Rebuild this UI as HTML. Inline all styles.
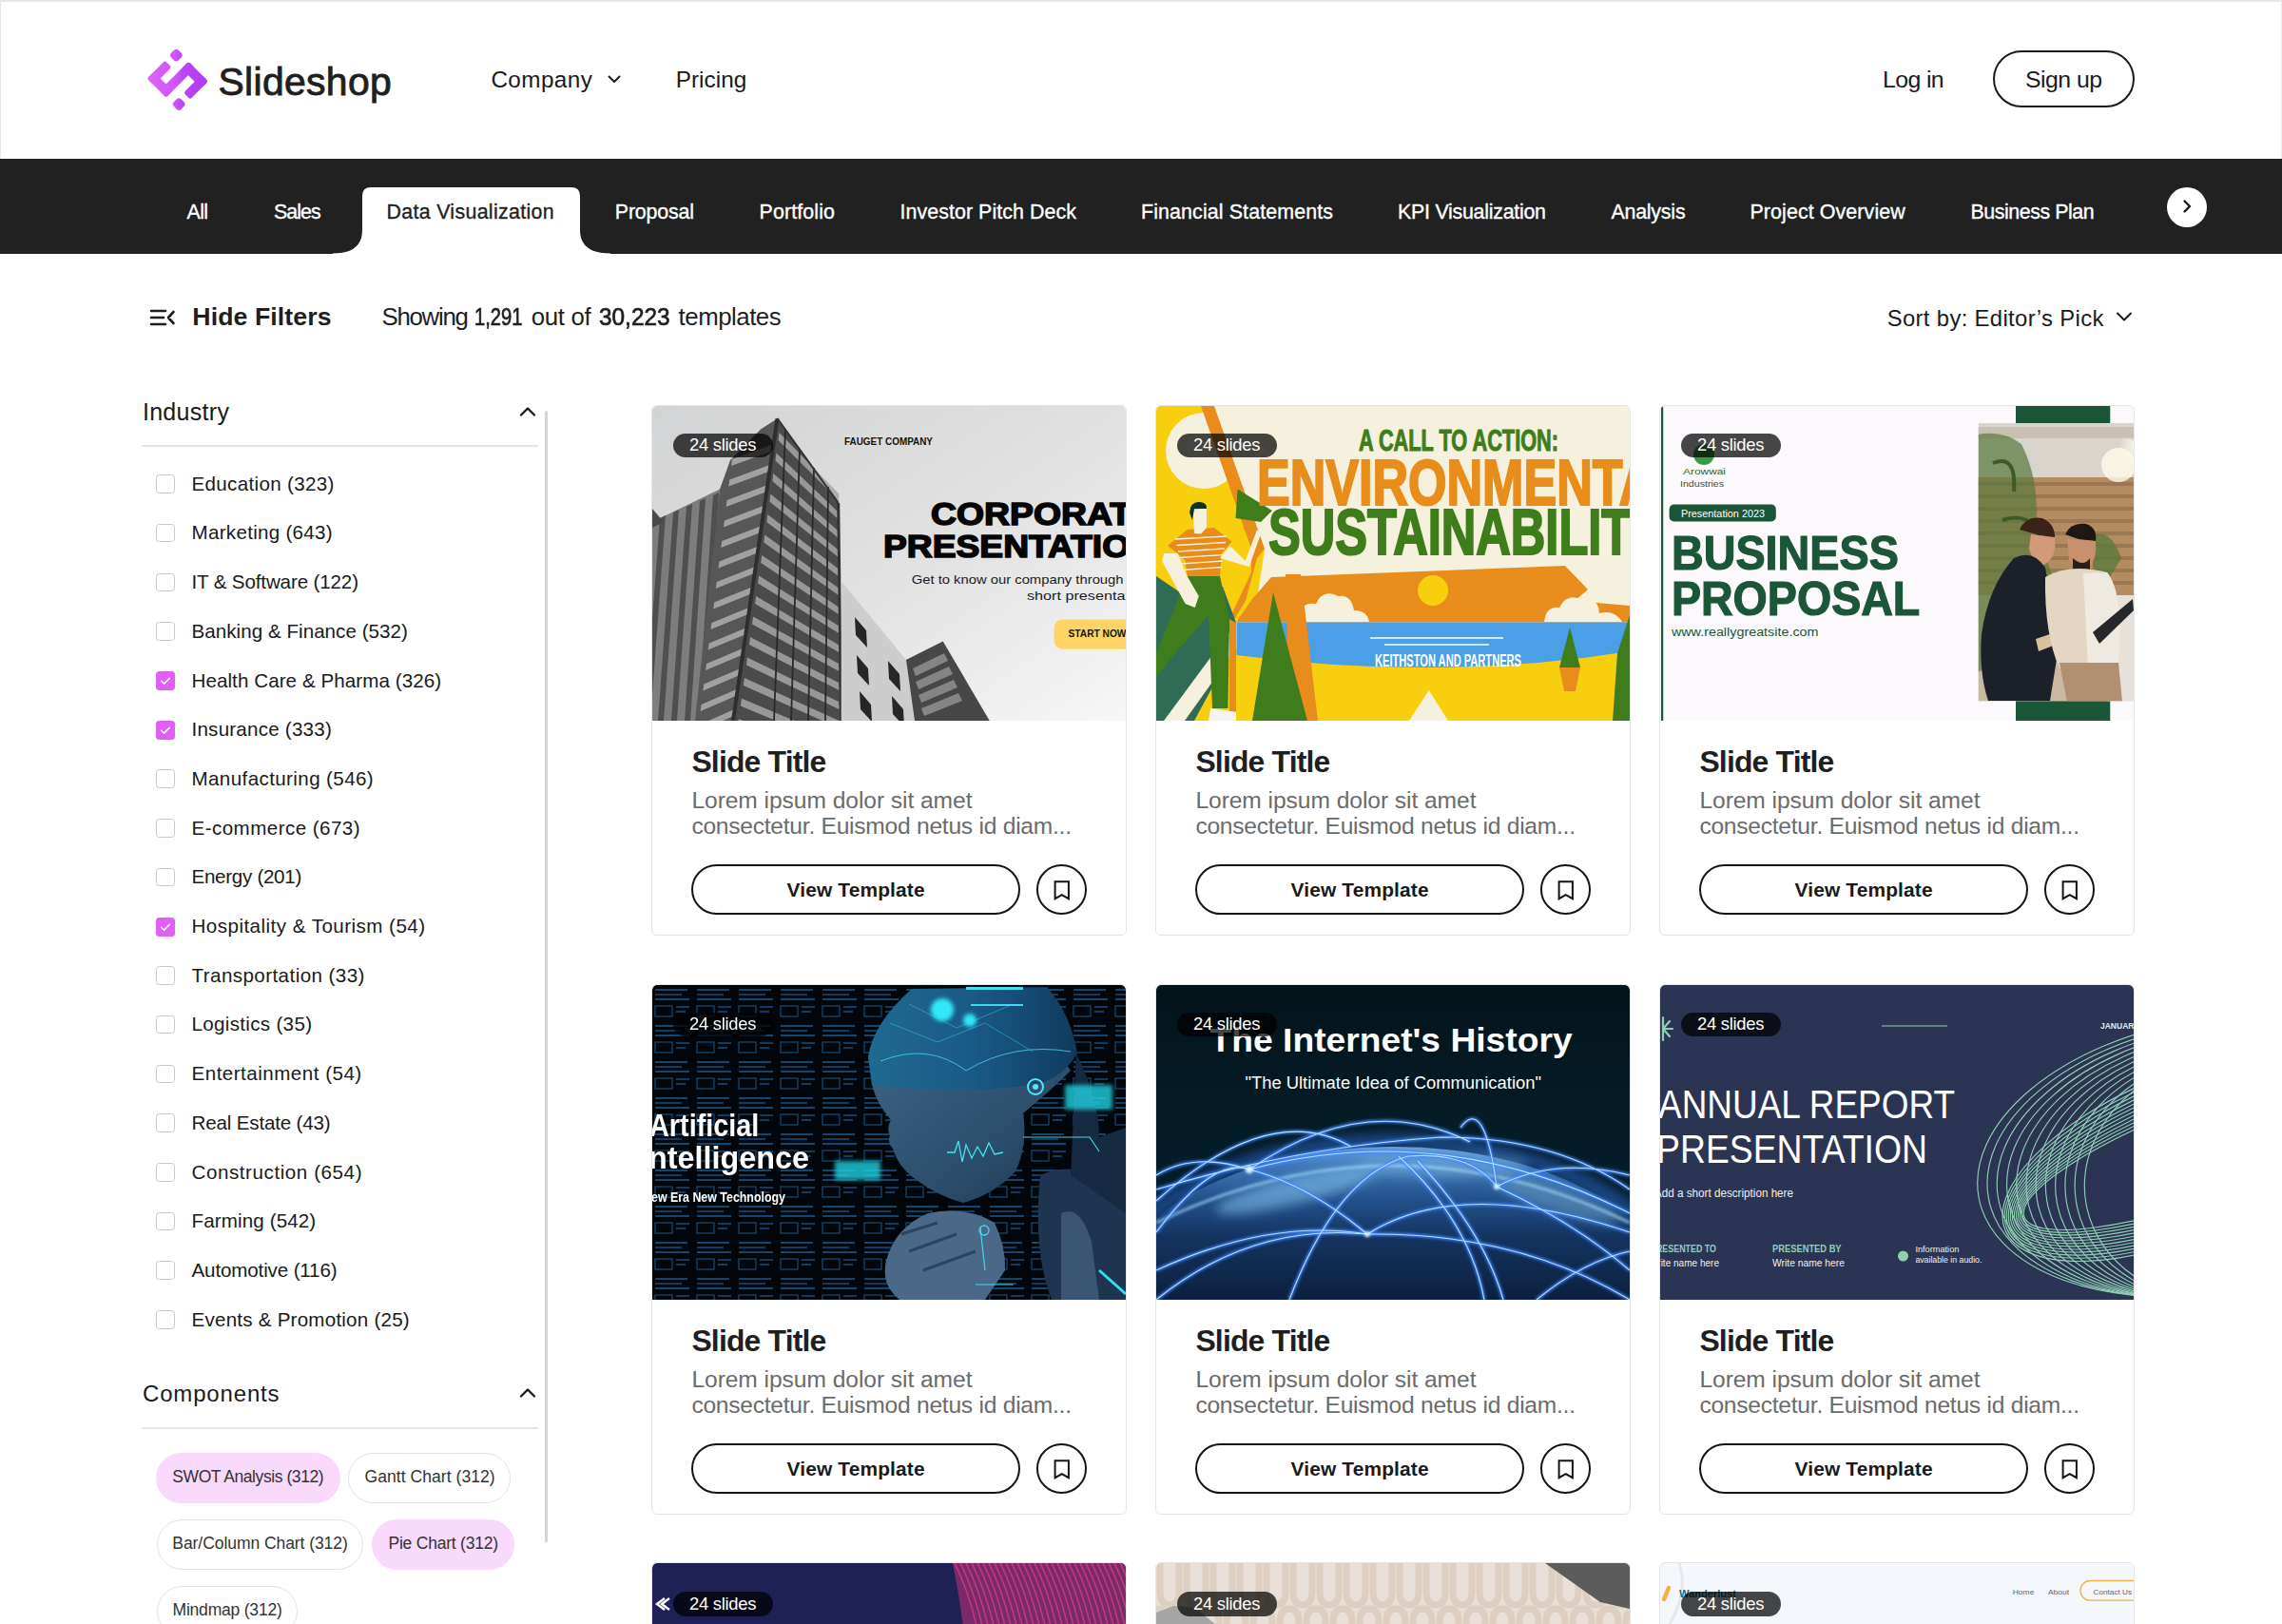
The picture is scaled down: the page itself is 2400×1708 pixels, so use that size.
<!DOCTYPE html>
<html><head><meta charset="utf-8"><title>Slideshop</title>
<style>
html,body{margin:0;padding:0;background:#fff;width:2400px;height:1708px;overflow:hidden;position:relative}
body{font-family:"Liberation Sans",sans-serif}
.t{position:absolute;white-space:nowrap}
b{font-weight:400;-webkit-text-stroke:0.7px #1f1f1f}
</style></head><body>
<div style="position:absolute;left:0;top:0;width:2400px;height:167px;background:#fff;box-sizing:border-box;border-top:2px solid #e8e8e8;border-left:1px solid #e8e8e8;border-right:1px solid #ececec"></div>
<svg style="position:absolute;left:0;top:0" width="240" height="130" viewBox="0 0 240 130"><defs><linearGradient id="lg" gradientUnits="userSpaceOnUse" x1="112" y1="112" x2="152" y2="152"><stop offset="0" stop-color="#dc62f9"/><stop offset="0.45" stop-color="#cf55f8"/><stop offset="0.6" stop-color="#b845f6"/><stop offset="1" stop-color="#b03ef4"/></linearGradient></defs><g transform="matrix(0.70711 -0.70711 0.70711 0.70711 0 0)" fill="url(#lg)"><rect x="51" y="167.7" width="26.6" height="9.8" rx="2.5"/><rect x="51" y="167.7" width="10.0" height="28.3" rx="2.5"/><rect x="51" y="186" width="43.4" height="10.0" rx="2.5"/><rect x="84" y="186" width="10.4" height="29.3" rx="2.5"/><rect x="67.5" y="205.5" width="26.9" height="9.8" rx="2.5"/><rect x="84.6" y="166.8" width="10.7" height="10.7" rx="3.2"/><rect x="50.2" y="205.2" width="10.7" height="10.7" rx="3.2"/></g></svg>
<svg style="position:absolute;left:638px;top:78px" width="16" height="11" viewBox="0 0 16 11"><path d="M2.5 2.5 L8 8 L13.5 2.5" fill="none" stroke="#1a1a1a" stroke-width="2" stroke-linecap="round" stroke-linejoin="round"/></svg>
<div style="position:absolute;left:2095.7px;top:53.4px;width:149.8px;height:59.4px;box-sizing:border-box;border:2px solid #1a1a1a;border-radius:30px"></div>
<div style="position:absolute;left:0;top:167px;width:2400px;height:99.5px;background:#212121"></div>
<svg style="position:absolute;left:350px;top:196px" width="292" height="71" viewBox="0 0 292 71"><path d="M0 70.5 Q31 70.5 31 46 L31 10 Q31 1 40 1 L251 1 Q260 1 260 10 L260 46 Q260 70.5 292 70.5 L292 71 L0 71 Z" fill="#ffffff"/></svg>
<div style="position:absolute;left:2279px;top:196.7px;width:42px;height:42px;border-radius:50%;background:#fff"></div>
<svg style="position:absolute;left:2290px;top:207px" width="20" height="20" viewBox="0 0 20 20"><path d="M7.5 4.5 L13 10 L7.5 15.5" fill="none" stroke="#1a1a1a" stroke-width="2.4" stroke-linecap="round" stroke-linejoin="round"/></svg>
<svg style="position:absolute;left:156px;top:324px" width="30" height="20" viewBox="0 0 30 20"><g fill="none" stroke="#1f1f1f" stroke-width="2.6" stroke-linecap="round" stroke-linejoin="round"><path d="M3 3 H18 M3 10 H16 M3 17 H18 M26.5 4 L21 10 L26.5 16"/></g></svg>
<svg style="position:absolute;left:2224px;top:326px" width="20" height="14" viewBox="0 0 20 14"><path d="M3 3.5 L10 10.5 L17 3.5" fill="none" stroke="#1a1a1a" stroke-width="2" stroke-linecap="round" stroke-linejoin="round"/></svg>
<svg style="position:absolute;left:544px;top:424.6px" width="22" height="16" viewBox="0 0 22 16"><path d="M4 11.5 L11 4.5 L18 11.5" fill="none" stroke="#1a1a1a" stroke-width="2.3" stroke-linecap="round" stroke-linejoin="round"/></svg>
<div style="position:absolute;left:149px;top:468.4px;width:417px;height:2px;background:#e6e6e6"></div>
<svg style="position:absolute;left:544px;top:1457.3px" width="22" height="16" viewBox="0 0 22 16"><path d="M4 11.5 L11 4.5 L18 11.5" fill="none" stroke="#1a1a1a" stroke-width="2.3" stroke-linecap="round" stroke-linejoin="round"/></svg>
<div style="position:absolute;left:149px;top:1500.6px;width:417px;height:2px;background:#e6e6e6"></div>
<div style="position:absolute;left:573px;top:431.5px;width:3.2px;height:1190px;background:#d4d4d4;border-radius:2px"></div>
<div style="position:absolute;left:164.3px;top:499.2px;width:19.5px;height:19.5px;box-sizing:border-box;border:1.6px solid #c8c8c8;border-radius:3.5px"></div>
<div style="position:absolute;left:164.3px;top:550.9px;width:19.5px;height:19.5px;box-sizing:border-box;border:1.6px solid #c8c8c8;border-radius:3.5px"></div>
<div style="position:absolute;left:164.3px;top:602.6px;width:19.5px;height:19.5px;box-sizing:border-box;border:1.6px solid #c8c8c8;border-radius:3.5px"></div>
<div style="position:absolute;left:164.3px;top:654.3px;width:19.5px;height:19.5px;box-sizing:border-box;border:1.6px solid #c8c8c8;border-radius:3.5px"></div>
<div style="position:absolute;left:164.2px;top:706.0px;width:20px;height:20px;border-radius:3.5px;background:#e060f6"></div>
<svg style="position:absolute;left:164.2px;top:706.0px" width="20" height="20" viewBox="0 0 20 20"><path d="M5.6 10.3 L8.6 13.1 L14.4 7.3" fill="none" stroke="#fff" stroke-width="1.5" stroke-linecap="round" stroke-linejoin="round"/></svg>
<div style="position:absolute;left:164.2px;top:757.7px;width:20px;height:20px;border-radius:3.5px;background:#e060f6"></div>
<svg style="position:absolute;left:164.2px;top:757.7px" width="20" height="20" viewBox="0 0 20 20"><path d="M5.6 10.3 L8.6 13.1 L14.4 7.3" fill="none" stroke="#fff" stroke-width="1.5" stroke-linecap="round" stroke-linejoin="round"/></svg>
<div style="position:absolute;left:164.3px;top:809.4px;width:19.5px;height:19.5px;box-sizing:border-box;border:1.6px solid #c8c8c8;border-radius:3.5px"></div>
<div style="position:absolute;left:164.3px;top:861.1px;width:19.5px;height:19.5px;box-sizing:border-box;border:1.6px solid #c8c8c8;border-radius:3.5px"></div>
<div style="position:absolute;left:164.3px;top:912.8px;width:19.5px;height:19.5px;box-sizing:border-box;border:1.6px solid #c8c8c8;border-radius:3.5px"></div>
<div style="position:absolute;left:164.2px;top:964.5px;width:20px;height:20px;border-radius:3.5px;background:#e060f6"></div>
<svg style="position:absolute;left:164.2px;top:964.5px" width="20" height="20" viewBox="0 0 20 20"><path d="M5.6 10.3 L8.6 13.1 L14.4 7.3" fill="none" stroke="#fff" stroke-width="1.5" stroke-linecap="round" stroke-linejoin="round"/></svg>
<div style="position:absolute;left:164.3px;top:1016.2px;width:19.5px;height:19.5px;box-sizing:border-box;border:1.6px solid #c8c8c8;border-radius:3.5px"></div>
<div style="position:absolute;left:164.3px;top:1067.9px;width:19.5px;height:19.5px;box-sizing:border-box;border:1.6px solid #c8c8c8;border-radius:3.5px"></div>
<div style="position:absolute;left:164.3px;top:1119.6px;width:19.5px;height:19.5px;box-sizing:border-box;border:1.6px solid #c8c8c8;border-radius:3.5px"></div>
<div style="position:absolute;left:164.3px;top:1171.3px;width:19.5px;height:19.5px;box-sizing:border-box;border:1.6px solid #c8c8c8;border-radius:3.5px"></div>
<div style="position:absolute;left:164.3px;top:1223.0px;width:19.5px;height:19.5px;box-sizing:border-box;border:1.6px solid #c8c8c8;border-radius:3.5px"></div>
<div style="position:absolute;left:164.3px;top:1274.7px;width:19.5px;height:19.5px;box-sizing:border-box;border:1.6px solid #c8c8c8;border-radius:3.5px"></div>
<div style="position:absolute;left:164.3px;top:1326.4px;width:19.5px;height:19.5px;box-sizing:border-box;border:1.6px solid #c8c8c8;border-radius:3.5px"></div>
<div style="position:absolute;left:164.3px;top:1378.1px;width:19.5px;height:19.5px;box-sizing:border-box;border:1.6px solid #c8c8c8;border-radius:3.5px"></div>
<div style="position:absolute;left:164.2px;top:1528.2px;width:193.5px;height:53.1px;border-radius:27px;background:#f9d9fc;"></div>
<div style="position:absolute;left:366.2px;top:1528.2px;width:170.9px;height:53.1px;border-radius:27px;border:1.6px solid #e2e2e2;box-sizing:border-box;"></div>
<div style="position:absolute;left:164.6px;top:1598px;width:217.3px;height:52.8px;border-radius:27px;border:1.6px solid #e2e2e2;box-sizing:border-box;"></div>
<div style="position:absolute;left:391px;top:1598px;width:150.1px;height:52.8px;border-radius:27px;background:#f9d9fc;"></div>
<div style="position:absolute;left:164.6px;top:1668.3px;width:148.8px;height:52.7px;border-radius:27px;border:1.6px solid #e2e2e2;box-sizing:border-box;"></div>
<div style="position:absolute;left:685px;top:426px;width:500px;height:557.5px;box-sizing:border-box;border:1.5px solid #e4e4e4;border-radius:6px;background:#fff;overflow:hidden"><div style="position:absolute;left:0;top:0;width:498px;height:331px;overflow:hidden;border-radius:5px 5px 0 0"><svg style="position:absolute;left:0;top:0" width="498" height="331" viewBox="0 0 498 331"><defs><linearGradient id="sky0" x1="0" y1="0" x2="1" y2="1"><stop offset="0" stop-color="#d2d3d4"/><stop offset="0.55" stop-color="#e2e2e2"/><stop offset="1" stop-color="#f7f7f7"/></linearGradient></defs><rect width="498" height="331" fill="url(#sky0)"/><polygon points="0,122 71,87.6 60,331 0,331" fill="#7d7d7d"/><polygon points="8,118 14,115 -2,331 -8,331" fill="#4f4f4f"/><polygon points="22,112 28,109 12,331 6,331" fill="#4f4f4f"/><polygon points="36,106 42,103 26,331 20,331" fill="#4f4f4f"/><polygon points="50,100 56,97 40,331 34,331" fill="#4f4f4f"/><polygon points="64,94 70,91 54,331 48,331" fill="#4f4f4f"/><polygon points="0,108 12,122 0,128" fill="#4a4a4a"/><polygon points="71,87.6 82,57 114,24.5 131.5,13.2 85,331 45,331" fill="#575757"/><polygon points="84.0,56.0 128.0,40.0 127.2,47.0 83.0,63.0" fill="#b4b4b4" opacity="0.8"/><polygon points="81.3,77.5 124.7,61.5 123.9,68.5 80.3,84.5" fill="#b4b4b4" opacity="0.8"/><polygon points="78.6,99.0 121.4,83.0 120.60000000000001,90.0 77.6,106.0" fill="#b4b4b4" opacity="0.8"/><polygon points="75.9,120.5 118.1,104.5 117.3,111.5 74.9,127.5" fill="#b4b4b4" opacity="0.8"/><polygon points="73.2,142.0 114.8,126.0 114.0,133.0 72.2,149.0" fill="#b4b4b4" opacity="0.8"/><polygon points="70.5,163.5 111.5,147.5 110.7,154.5 69.5,170.5" fill="#b4b4b4" opacity="0.8"/><polygon points="67.8,185.0 108.2,169.0 107.4,176.0 66.8,192.0" fill="#b4b4b4" opacity="0.8"/><polygon points="65.1,206.5 104.9,190.5 104.10000000000001,197.5 64.1,213.5" fill="#b4b4b4" opacity="0.8"/><polygon points="62.400000000000006,228.0 101.6,212.0 100.8,219.0 61.400000000000006,235.0" fill="#b4b4b4" opacity="0.8"/><polygon points="59.7,249.5 98.3,233.5 97.5,240.5 58.7,256.5" fill="#b4b4b4" opacity="0.8"/><polygon points="57.0,271.0 95.0,255.0 94.2,262.0 56.0,278.0" fill="#b4b4b4" opacity="0.8"/><polygon points="54.3,292.5 91.7,276.5 90.9,283.5 53.3,299.5" fill="#b4b4b4" opacity="0.8"/><polygon points="51.599999999999994,314.0 88.4,298.0 87.60000000000001,305.0 50.599999999999994,321.0" fill="#b4b4b4" opacity="0.8"/><polygon points="48.900000000000006,335.5 85.1,319.5 84.3,326.5 47.900000000000006,342.5" fill="#b4b4b4" opacity="0.8"/><polygon points="131.5,13.2 195.7,101.9 198.7,331 85,331" fill="#4b4b4b"/><polygon points="133.5,28.0 196,92.0 196.5,100.0 132.5,36.0" fill="#a6a6a6" opacity="0.85"/><polygon points="130.45,49.5 196,111.9 196.5,119.9 129.45,57.5" fill="#a6a6a6" opacity="0.85"/><polygon points="127.4,71.0 196,131.8 196.5,139.8 126.4,79.0" fill="#a6a6a6" opacity="0.85"/><polygon points="124.35,92.5 196,151.7 196.5,159.7 123.35,100.5" fill="#a6a6a6" opacity="0.85"/><polygon points="121.3,114.0 196,171.6 196.5,179.6 120.3,122.0" fill="#a6a6a6" opacity="0.85"/><polygon points="118.25,135.5 196,191.5 196.5,199.5 117.25,143.5" fill="#a6a6a6" opacity="0.85"/><polygon points="115.2,157.0 196,211.4 196.5,219.4 114.2,165.0" fill="#a6a6a6" opacity="0.85"/><polygon points="112.15,178.5 196,231.3 196.5,239.3 111.15,186.5" fill="#a6a6a6" opacity="0.85"/><polygon points="109.1,200.0 196,251.2 196.5,259.2 108.1,208.0" fill="#a6a6a6" opacity="0.85"/><polygon points="106.05,221.5 196,271.1 196.5,279.1 105.05,229.5" fill="#a6a6a6" opacity="0.85"/><polygon points="103.0,243.0 196,291.0 196.5,299.0 102.0,251.0" fill="#a6a6a6" opacity="0.85"/><polygon points="99.95,264.5 196,310.9 196.5,318.9 98.95,272.5" fill="#a6a6a6" opacity="0.85"/><polygon points="96.9,286.0 196,330.8 196.5,338.8 95.9,294.0" fill="#a6a6a6" opacity="0.85"/><polygon points="93.85,307.5 196,350.7 196.5,358.7 92.85,315.5" fill="#a6a6a6" opacity="0.85"/><polygon points="90.80000000000001,329.0 196,370.6 196.5,378.6 89.80000000000001,337.0" fill="#a6a6a6" opacity="0.85"/><line x1="140" y1="25" x2="128" y2="331" stroke="#2a2a2a" stroke-width="1.8"/><line x1="155" y1="45" x2="146" y2="331" stroke="#2a2a2a" stroke-width="1.8"/><line x1="170" y1="65" x2="164" y2="331" stroke="#2a2a2a" stroke-width="1.8"/><line x1="185" y1="85" x2="182" y2="331" stroke="#2a2a2a" stroke-width="1.8"/><line x1="131.5" y1="13.2" x2="85" y2="331" stroke="#2e2e2e" stroke-width="4"/><line x1="131.5" y1="13.2" x2="195.7" y2="101.9" stroke="#333" stroke-width="2"/><line x1="195.7" y1="101.9" x2="198.7" y2="331" stroke="#333" stroke-width="3"/><polygon points="198.7,184.5 267,267 305.7,247.6 354.7,331 198.7,331" fill="#cdcdcd"/><polygon points="213,222 225,236 226,254 214,241" fill="#262626"/><polygon points="215,262 227,276 228,294 216,281" fill="#262626"/><polygon points="218,300 230,314 231,332 219,319" fill="#262626"/><polygon points="248,268 260,282 261,300 249,287" fill="#262626"/><polygon points="252,305 264,319 265,337 253,324" fill="#262626"/><polygon points="267,267 305.7,247.6 354.7,331 276,331" fill="#474747"/><polygon points="274,276 307,260 311,268 277,284" fill="#a0a0a0" opacity="0.7"/><polygon points="277,290 312,274 316,282 280,298" fill="#a0a0a0" opacity="0.7"/><polygon points="280,304 317,288 321,296 283,312" fill="#a0a0a0" opacity="0.7"/><polygon points="283,318 322,302 326,310 286,326" fill="#a0a0a0" opacity="0.7"/><text x="202" y="41.4" font-size="10.6" font-weight="bold" fill="#111" font-family="Liberation Sans" textLength="93" lengthAdjust="spacingAndGlyphs" >FAUGET COMPANY</text><text x="293" y="125" font-size="34" font-weight="bold" fill="#050505" font-family="Liberation Sans" textLength="236" lengthAdjust="spacingAndGlyphs" stroke="#050505" stroke-width="1.6">CORPORATE</text><text x="243" y="158.6" font-size="34" font-weight="bold" fill="#050505" font-family="Liberation Sans" textLength="286" lengthAdjust="spacingAndGlyphs" stroke="#050505" stroke-width="1.6">PRESENTATION</text><text x="272.7" y="186.5" font-size="13.5" font-weight="normal" fill="#1a1a1a" font-family="Liberation Sans" textLength="250" lengthAdjust="spacingAndGlyphs" >Get to know our company through this</text><text x="394" y="203.5" font-size="13.5" font-weight="normal" fill="#1a1a1a" font-family="Liberation Sans" textLength="134" lengthAdjust="spacingAndGlyphs" >short presentation.</text><rect x="422.5" y="224.4" width="120" height="31.3" rx="9" fill="#fdd465"/><text x="437.5" y="242.5" font-size="10.8" font-weight="bold" fill="#141414" font-family="Liberation Sans" textLength="61" lengthAdjust="spacingAndGlyphs" >START NOW</text></svg></div></div>
<div style="position:absolute;left:727px;top:909.3px;width:346px;height:52.5px;box-sizing:border-box;border:2px solid #141414;border-radius:27px"></div>
<div style="position:absolute;left:1090px;top:909.3px;width:52.7px;height:52.7px;box-sizing:border-box;border:2px solid #141414;border-radius:50%"></div>
<svg style="position:absolute;left:1106px;top:925.5px" width="22" height="21" viewBox="0 0 22 21"><path d="M3.6 1.2 H17.9 V19.2 L10.75 15.2 L3.6 19.2 Z" fill="none" stroke="#141414" stroke-width="2" stroke-linejoin="miter"/></svg>
<div style="position:absolute;left:707.9px;top:455.7px;width:104.9px;height:25.8px;border-radius:13px;background:rgba(0,0,0,0.72)"></div>
<div style="position:absolute;left:1215px;top:426px;width:500px;height:557.5px;box-sizing:border-box;border:1.5px solid #e4e4e4;border-radius:6px;background:#fff;overflow:hidden"><div style="position:absolute;left:0;top:0;width:498px;height:331px;overflow:hidden;border-radius:5px 5px 0 0"><svg style="position:absolute;left:0;top:0" width="498" height="331" viewBox="0 0 498 331"><defs></defs><rect width="498" height="331" fill="#f6f1dc"/><polygon points="0,0 52,0 114,150 106,204 84,227 84,331 0,331" fill="#f8cf0e"/><circle cx="50" cy="47" r="40" fill="#f6f1dc"/><polygon points="47,0 61,0 114,150 106,160 94,205 80,228 84,228 84,331 77,331 77,224 100,175 100,150" fill="#e88d1b"/><polygon points="0,179 25,196 70,190 84,228 84,250 40,331 0,331" fill="#2f6b55"/><polygon points="106,204 84,228 8,331 30,331 84,255 112,215" fill="#f6f1dc"/><polygon points="77,224 84,228 84,331 77,331" fill="#e88d1b"/><polygon points="32.6,179 67,179 77,224 75.4,318 59,318 55,220 20,260 0,285 0,260" fill="#3f7d1c"/><polygon points="0,262 32,200 38,210 6,275" fill="#3f7d1c"/><polygon points="12,147 32.6,130 61,128 79.5,142.6 69,155 67,179 32.6,179 30.6,163 22.4,155" fill="#e88d1b"/><line x1="20.0" y1="140.0" x2="74" y2="137.0" stroke="#f6f1dc" stroke-width="1.3"/><line x1="21.5" y1="146.5" x2="73" y2="143.5" stroke="#f6f1dc" stroke-width="1.3"/><line x1="23.0" y1="153.0" x2="72" y2="150.0" stroke="#f6f1dc" stroke-width="1.3"/><line x1="24.5" y1="159.5" x2="71" y2="156.5" stroke="#f6f1dc" stroke-width="1.3"/><line x1="26.0" y1="166.0" x2="70" y2="163.0" stroke="#f6f1dc" stroke-width="1.3"/><line x1="27.5" y1="172.5" x2="69" y2="169.5" stroke="#f6f1dc" stroke-width="1.3"/><polygon points="38.7,110 53,106 53,128 47,134.5 40,134" fill="#f6f1dc"/><path d="M35 112 Q36 100 46 101 Q54 102 53 108 L40 108 L38 120 Z" fill="#14301e"/><polygon points="8,155 22.4,155 32.6,179 44.8,200 40.7,212 30.6,208 6,163" fill="#f6f1dc"/><polygon points="77.4,146.7 93.7,163 106,130 110,134.5 97.8,169 67,160" fill="#f6f1dc"/><polygon points="85.6,87.6 122,110 110,122 83.5,118" fill="#3f7d1c"/><polygon points="57,318 85.6,322 86,331 55,331" fill="#f4f4f0"/><polygon points="101,203 121,180 430,168 454,193 440,205 498,210 498,227.5 84,227.5" fill="#e88d1b"/><path d="M148 227 Q150 205 168 208 Q175 192 192 200 Q205 198 208 215 Q222 215 224 227 Z" fill="#f6f1dc"/><path d="M408 227 Q410 210 424 212 Q432 196 448 204 Q465 200 466 218 Q482 214 490 227 Z" fill="#f6f1dc"/><circle cx="291" cy="194" r="16" fill="#f8cf0e"/><rect x="84" y="255" width="414" height="76" fill="#f8cf0e"/><path d="M84.5 227.5 L498 227.5 L498 258 Q300 290 84.5 262 Z" fill="#4b9fe6"/><polygon points="136,177 152,177 170,331 140,331" fill="#e88d1b"/><polygon points="123,196 159,331 101,331" fill="#3f7d1c"/><polygon points="435,233 446,275 424,275" fill="#3f7d1c"/><polygon points="424,275 446,275 441,300 429,300" fill="#e88d1b"/><polygon points="498,220 485,260 480,331 498,331" fill="#3f7d1c"/><polygon points="286.7,299 307,331 266,331" fill="#f6f1dc"/><rect x="225" y="243" width="140" height="2" fill="#f6f6f6" opacity="0.8"/><rect x="240" y="250" width="110" height="2" fill="#f6f6f6" opacity="0.8"/><text x="213" y="46.5" font-size="31" font-weight="bold" fill="#3f7d1c" font-family="Liberation Sans" textLength="210" lengthAdjust="spacingAndGlyphs" stroke="#3f7d1c" stroke-width="1">A CALL TO ACTION:</text><text x="106" y="103.5" font-size="68" font-weight="bold" fill="#e88d1b" font-family="Liberation Sans" textLength="450" lengthAdjust="spacingAndGlyphs" stroke="#e88d1b" stroke-width="2.2">ENVIRONMENTAL</text><text x="118" y="156" font-size="69" font-weight="bold" fill="#3f7d1c" font-family="Liberation Sans" textLength="415" lengthAdjust="spacingAndGlyphs" stroke="#3f7d1c" stroke-width="2.2">SUSTAINABILITY</text><text x="230" y="274.4" font-size="17.5" font-weight="bold" fill="#ffffff" font-family="Liberation Sans" textLength="154" lengthAdjust="spacingAndGlyphs" >KEITHSTON AND PARTNERS</text></svg></div></div>
<div style="position:absolute;left:1257px;top:909.3px;width:346px;height:52.5px;box-sizing:border-box;border:2px solid #141414;border-radius:27px"></div>
<div style="position:absolute;left:1620px;top:909.3px;width:52.7px;height:52.7px;box-sizing:border-box;border:2px solid #141414;border-radius:50%"></div>
<svg style="position:absolute;left:1636px;top:925.5px" width="22" height="21" viewBox="0 0 22 21"><path d="M3.6 1.2 H17.9 V19.2 L10.75 15.2 L3.6 19.2 Z" fill="none" stroke="#141414" stroke-width="2" stroke-linejoin="miter"/></svg>
<div style="position:absolute;left:1237.9px;top:455.7px;width:104.9px;height:25.8px;border-radius:13px;background:rgba(0,0,0,0.72)"></div>
<div style="position:absolute;left:1745px;top:426px;width:500px;height:557.5px;box-sizing:border-box;border:1.5px solid #e4e4e4;border-radius:6px;background:#fff;overflow:hidden"><div style="position:absolute;left:0;top:0;width:498px;height:331px;overflow:hidden;border-radius:5px 5px 0 0"><svg style="position:absolute;left:0;top:0" width="498" height="331" viewBox="0 0 498 331"><defs><linearGradient id="ph2" x1="0" y1="0" x2="0" y2="1"><stop offset="0" stop-color="#d4d2cc"/><stop offset="0.22" stop-color="#cfc9bd"/><stop offset="0.3" stop-color="#9d7a55"/><stop offset="0.55" stop-color="#b08d64"/><stop offset="1" stop-color="#c2b59e"/></linearGradient>
<radialGradient id="lt2" cx="0.85" cy="0.18" r="0.35"><stop offset="0" stop-color="#fffdf5"/><stop offset="1" stop-color="#fffdf5" stop-opacity="0"/></radialGradient></defs><rect width="498" height="331" fill="#fbf9fb"/><rect x="1" y="0" width="2.2" height="331" fill="#1c5638"/><rect x="374" y="0" width="99.3" height="18" fill="#1c5638"/><rect x="374" y="310" width="99.3" height="21" fill="#1c5638"/><svg x="334.8" y="18.1" width="163.2" height="292.1" viewBox="334.8 18.1 163.2 292.1" overflow="hidden"><rect x="334" y="18" width="165" height="293" fill="#d9d5cd"/><rect x="334" y="22" width="165" height="12" fill="#c8c0b2"/><rect x="334" y="75" width="165" height="124" fill="#b48c62"/><rect x="334" y="80" width="165" height="4" fill="#8a6a48" opacity="0.6"/><rect x="334" y="93" width="165" height="4" fill="#8a6a48" opacity="0.6"/><rect x="334" y="106" width="165" height="4" fill="#8a6a48" opacity="0.6"/><rect x="334" y="119" width="165" height="4" fill="#8a6a48" opacity="0.6"/><rect x="334" y="132" width="165" height="4" fill="#8a6a48" opacity="0.6"/><rect x="334" y="145" width="165" height="4" fill="#8a6a48" opacity="0.6"/><rect x="334" y="158" width="165" height="4" fill="#8a6a48" opacity="0.6"/><rect x="334" y="171" width="165" height="4" fill="#8a6a48" opacity="0.6"/><rect x="334" y="184" width="165" height="4" fill="#8a6a48" opacity="0.6"/><rect x="470" y="199" width="30" height="112" fill="#e6e2da"/><rect x="334" y="199" width="140" height="112" fill="#c9b9a0"/><circle cx="482" cy="62" r="30" fill="url(#lt2)"/><circle cx="482" cy="62" r="18" fill="#fffbea" opacity="0.8"/><path d="M334 30 Q360 25 380 40 Q400 80 395 130 Q410 170 420 200 Q390 230 370 260 L334 280 Z" fill="#58773a" opacity="0.7"/><path d="M350 60 Q375 50 372 90 M360 120 Q390 110 400 140" stroke="#3e5a28" stroke-width="4" fill="none"/><path d="M455 135 Q475 130 485 160 L470 185 L455 170 Z" fill="#5a7a3a" opacity="0.8"/><path d="M378 130 Q385 115 402 118 Q416 124 415 140 L396 135 Z" fill="#3a2418"/><path d="M390 135 L415 138 Q418 158 404 167 Q392 165 388 150 Z" fill="#d29a78"/><path d="M372 160 Q392 150 405 170 L412 210 L418 260 L410 310 L345 310 Q335 280 338 240 Q345 190 372 160 Z" fill="#1c2129"/><polygon points="395,245 440,230 444,240 398,258" fill="#d8c29c"/><circle cx="425" cy="233" r="5" fill="#d29a78"/><path d="M426 135 Q432 122 448 124 Q460 128 458 142 L440 140 Z" fill="#1e1814"/><path d="M428 140 L458 142 Q460 160 450 172 Q436 176 430 162 Z" fill="#c8906c"/><path d="M434 160 Q445 170 452 160 L452 172 Q442 180 434 172 Z" fill="#2a1e16"/><path d="M405 180 Q430 165 470 175 Q482 190 484 230 L482 276 L420 276 Q404 240 405 180 Z" fill="#e3d6c2"/><path d="M445 176 L470 175 Q482 190 484 230 L482 276 L450 276 Z" fill="#eeeae2"/><polygon points="455,238 497,203 498,215 462,250" fill="#26282c"/><polygon points="420,270 482,270 486,311 428,311" fill="#b09070"/></svg><circle cx="46" cy="51" r="11" fill="#3e9a4a"/><text x="24" y="72" font-size="9.5" font-weight="normal" fill="#2a5a3e" font-family="Liberation Sans" textLength="45" lengthAdjust="spacingAndGlyphs" >Arowwai</text><text x="21" y="84.5" font-size="9.5" font-weight="normal" fill="#2a5a3e" font-family="Liberation Sans" textLength="46" lengthAdjust="spacingAndGlyphs" >Industries</text><rect x="9.6" y="103.5" width="112.2" height="17.9" rx="5" fill="#1c5638"/><text x="22" y="116.5" font-size="10.5" font-weight="normal" fill="#ffffff" font-family="Liberation Sans" textLength="88" lengthAdjust="spacingAndGlyphs" >Presentation 2023</text><text x="11.9" y="171.6" font-size="50" font-weight="bold" fill="#1c5638" font-family="Liberation Sans" textLength="239" lengthAdjust="spacingAndGlyphs" stroke="#1c5638" stroke-width="1.2">BUSINESS</text><text x="11.9" y="220" font-size="50" font-weight="bold" fill="#1c5638" font-family="Liberation Sans" textLength="261.4" lengthAdjust="spacingAndGlyphs" stroke="#1c5638" stroke-width="1.2">PROPOSAL</text><text x="11.9" y="242" font-size="12.5" font-weight="normal" fill="#1c5638" font-family="Liberation Sans" textLength="154.6" lengthAdjust="spacingAndGlyphs" >www.reallygreatsite.com</text></svg></div></div>
<div style="position:absolute;left:1787px;top:909.3px;width:346px;height:52.5px;box-sizing:border-box;border:2px solid #141414;border-radius:27px"></div>
<div style="position:absolute;left:2150px;top:909.3px;width:52.7px;height:52.7px;box-sizing:border-box;border:2px solid #141414;border-radius:50%"></div>
<svg style="position:absolute;left:2166px;top:925.5px" width="22" height="21" viewBox="0 0 22 21"><path d="M3.6 1.2 H17.9 V19.2 L10.75 15.2 L3.6 19.2 Z" fill="none" stroke="#141414" stroke-width="2" stroke-linejoin="miter"/></svg>
<div style="position:absolute;left:1767.9px;top:455.7px;width:104.9px;height:25.8px;border-radius:13px;background:rgba(0,0,0,0.72)"></div>
<div style="position:absolute;left:685px;top:1035px;width:500px;height:557.5px;box-sizing:border-box;border:1.5px solid #e4e4e4;border-radius:6px;background:#fff;overflow:hidden"><div style="position:absolute;left:0;top:0;width:498px;height:331px;overflow:hidden;border-radius:5px 5px 0 0"><svg style="position:absolute;left:0;top:0" width="498" height="331" viewBox="0 0 498 331"><defs><pattern id="hud3" width="44" height="38" patternUnits="userSpaceOnUse"><rect width="44" height="38" fill="#01060b"/><rect x="3" y="4" width="34" height="2" fill="#12466e"/><rect x="3" y="9" width="28" height="2" fill="#0f3c60"/><rect x="3" y="14" width="36" height="2" fill="#12466e"/><rect x="3" y="22" width="18" height="11" fill="none" stroke="#134a74" stroke-width="1.2"/><rect x="25" y="22" width="14" height="2" fill="#0f3c60"/><rect x="25" y="27" width="10" height="2" fill="#0f3c60"/></pattern>
<linearGradient id="face3" x1="0" y1="0" x2="1" y2="1"><stop offset="0" stop-color="#3d6384"/><stop offset="0.6" stop-color="#2c4f6e"/><stop offset="1" stop-color="#1c3650"/></linearGradient>
<linearGradient id="brain3" x1="0" y1="0" x2="1" y2="0"><stop offset="0" stop-color="#1e6a90"/><stop offset="0.5" stop-color="#1a5a86"/><stop offset="1" stop-color="#103a5e"/></linearGradient>
<filter id="gl3" x="-30%" y="-30%" width="160%" height="160%"><feGaussianBlur stdDeviation="2"/></filter></defs><rect width="498" height="331" fill="url(#hud3)"/><path d="M408 200 Q440 185 470 205 L498 230 L498 331 L420 331 Q400 280 408 200 Z" fill="#1d3550"/><path d="M446 72 Q470 120 470 160 L498 150 L498 240 L440 200 Z" fill="#142a40"/><path d="M231 105 Q236 125 251 142 Q246 150 250 158 Q247 166 253 172 Q258 190 275 203 Q300 222 327 229 Q360 220 382 196 Q395 170 390 135 Q420 110 440 90 L420 60 L260 60 Z" fill="url(#face3)"/><path d="M227 76 Q232 40 273 4 L415 2 Q440 30 447 72 Q430 100 400 105 Q330 115 231 105 Z" fill="url(#brain3)"/><path d="M240 80 Q290 60 330 90 Q380 60 440 70" stroke="#4ad8f0" stroke-width="1" fill="none" opacity="0.8"/><path d="M250 40 L300 60 L350 40 L400 70 M270 20 L320 45 L380 20" stroke="#3ac0e0" stroke-width="0.8" fill="none" opacity="0.7"/><g filter="url(#gl3)"><circle cx="305" cy="26" r="12" fill="#30e8f8"/><circle cx="334" cy="37" r="7" fill="#30e8f8"/><rect x="434" y="105" width="50" height="26" fill="#20d0e0" opacity="0.8"/><rect x="192" y="185" width="48" height="20" fill="#20d0e0" opacity="0.8"/></g><rect x="330" y="2" width="60" height="3" fill="#40e0f0"/><rect x="335" y="20" width="55" height="2" fill="#40d8f0"/><path d="M310 176 L318 176 L322 164 L326 186 L330 168 L336 182 L342 170 L348 180 L354 166 L360 178 L369 176" stroke="#40e8f0" stroke-width="1.3" fill="none"/><circle cx="403" cy="107" r="8" fill="none" stroke="#50e8f8" stroke-width="2"/><circle cx="403" cy="107" r="3" fill="#50e8f8"/><path d="M390 160 L460 160 L470 175" stroke="#40d8f0" stroke-width="1.2" fill="none"/><path d="M246 290 Q255 255 290 240 Q330 232 360 250 Q372 275 371 300 L350 331 L260 331 Q240 315 246 290 Z" fill="#4a6888"/><path d="M262 262 L300 250 M270 280 L320 262 M285 300 L340 280" stroke="#2a4560" stroke-width="3"/><path d="M345 255 L350 300 M340 315 L380 315" stroke="#40d8f0" stroke-width="1.2" fill="none"/><circle cx="349" cy="258" r="5" fill="none" stroke="#40d8f0" stroke-width="1.3"/><path d="M430 240 Q450 230 462 270 L470 331 L430 331 Z" fill="#3a5674"/><line x1="470" y1="300" x2="498" y2="325" stroke="#30e0f0" stroke-width="3"/><text x="-3" y="159.4" font-size="32.5" font-weight="bold" fill="#ffffff" font-family="Liberation Sans" textLength="115.4" lengthAdjust="spacingAndGlyphs" >Artificial</text><text x="-4" y="193" font-size="32.5" font-weight="bold" fill="#ffffff" font-family="Liberation Sans" textLength="169" lengthAdjust="spacingAndGlyphs" >ntelligence</text><text x="-1" y="227.5" font-size="14.3" font-weight="bold" fill="#ffffff" font-family="Liberation Sans" textLength="141" lengthAdjust="spacingAndGlyphs" >ew Era New Technology</text></svg></div></div>
<div style="position:absolute;left:727px;top:1518.3px;width:346px;height:52.5px;box-sizing:border-box;border:2px solid #141414;border-radius:27px"></div>
<div style="position:absolute;left:1090px;top:1518.3px;width:52.7px;height:52.7px;box-sizing:border-box;border:2px solid #141414;border-radius:50%"></div>
<svg style="position:absolute;left:1106px;top:1534.5px" width="22" height="21" viewBox="0 0 22 21"><path d="M3.6 1.2 H17.9 V19.2 L10.75 15.2 L3.6 19.2 Z" fill="none" stroke="#141414" stroke-width="2" stroke-linejoin="miter"/></svg>
<div style="position:absolute;left:707.9px;top:1064.7px;width:104.9px;height:25.8px;border-radius:13px;background:rgba(0,0,0,0.72)"></div>
<div style="position:absolute;left:1215px;top:1035px;width:500px;height:557.5px;box-sizing:border-box;border:1.5px solid #e4e4e4;border-radius:6px;background:#fff;overflow:hidden"><div style="position:absolute;left:0;top:0;width:498px;height:331px;overflow:hidden;border-radius:5px 5px 0 0"><svg style="position:absolute;left:0;top:0" width="498" height="331" viewBox="0 0 498 331"><defs><linearGradient id="bg4" x1="0" y1="0" x2="0" y2="1"><stop offset="0" stop-color="#03141a"/><stop offset="0.45" stop-color="#041c26"/><stop offset="1" stop-color="#06203a"/></linearGradient>
<linearGradient id="gl4" gradientUnits="userSpaceOnUse" x1="0" y1="170" x2="0" y2="331"><stop offset="0" stop-color="#6aa4dc"/><stop offset="0.12" stop-color="#3f78b8"/><stop offset="0.35" stop-color="#22508a"/><stop offset="0.6" stop-color="#13335e"/><stop offset="1" stop-color="#0b2040"/></linearGradient>
<radialGradient id="sh4" cx="249" cy="340" r="300" gradientUnits="userSpaceOnUse" gradientTransform="translate(0 -30) scale(1 1.1)"><stop offset="0.7" stop-color="#000" stop-opacity="0"/><stop offset="1" stop-color="#6ab0f0" stop-opacity="0.5"/></radialGradient>
<filter id="bl4" x="-20%" y="-50%" width="140%" height="200%"><feGaussianBlur stdDeviation="6"/></filter>
<filter id="bl4b" x="-20%" y="-20%" width="140%" height="140%"><feGaussianBlur stdDeviation="1.8"/></filter></defs><rect width="498" height="331" fill="url(#bg4)"/><ellipse cx="249" cy="340" rx="306" ry="176" fill="none" stroke="#2e6ad0" stroke-width="16" opacity="0.55" filter="url(#bl4)"/><ellipse cx="249" cy="340" rx="300" ry="170" fill="url(#gl4)"/><g filter="url(#bl4)" opacity="0.55"><ellipse cx="150" cy="215" rx="90" ry="14" transform="rotate(-14 150 215)" fill="#8ac8f0"/><ellipse cx="300" cy="190" rx="90" ry="12" fill="#7ab4e0"/><ellipse cx="420" cy="225" rx="70" ry="14" transform="rotate(18 420 225)" fill="#6aa0c8"/></g><path d="M0 250 Q249 130 498 250" stroke="#a8dcff" stroke-width="2.5" fill="none" opacity="0.8" filter="url(#bl4b)"/><g filter="url(#bl4b)" stroke="#3d86ff" stroke-width="3.2" fill="none"><path d="M0 227 Q120 120 205 170"/><path d="M98 194 Q220 110 330 165"/><path d="M98 194 Q160 210 222 262"/><path d="M0 260 Q60 180 98 194"/><path d="M98 194 Q300 140 498 240"/><path d="M222 262 Q320 200 498 260"/><path d="M0 331 Q100 250 222 262"/><path d="M222 262 Q380 260 498 331"/><path d="M140 331 Q190 200 265 180"/><path d="M265 180 Q330 175 358 212"/><path d="M320 150 Q345 115 358 212"/><path d="M358 212 Q420 180 498 200"/><path d="M255 180 Q330 250 345 331"/><path d="M275 185 Q345 260 365 331"/><path d="M0 300 Q120 245 222 262"/><path d="M400 331 Q450 290 498 280"/><path d="M358 212 Q440 250 498 300"/><path d="M0 200 Q40 175 98 194"/><path d="M0 215 Q150 170 300 160 Q420 160 498 215"/></g><g stroke="#b8dcff" stroke-width="1.1" fill="none"><path d="M0 227 Q120 120 205 170"/><path d="M98 194 Q220 110 330 165"/><path d="M98 194 Q160 210 222 262"/><path d="M0 260 Q60 180 98 194"/><path d="M98 194 Q300 140 498 240"/><path d="M222 262 Q320 200 498 260"/><path d="M0 331 Q100 250 222 262"/><path d="M222 262 Q380 260 498 331"/><path d="M140 331 Q190 200 265 180"/><path d="M265 180 Q330 175 358 212"/><path d="M320 150 Q345 115 358 212"/><path d="M358 212 Q420 180 498 200"/><path d="M255 180 Q330 250 345 331"/><path d="M275 185 Q345 260 365 331"/><path d="M0 300 Q120 245 222 262"/><path d="M400 331 Q450 290 498 280"/><path d="M358 212 Q440 250 498 300"/><path d="M0 200 Q40 175 98 194"/><path d="M0 215 Q150 170 300 160 Q420 160 498 215"/></g><g filter="url(#bl4b)" fill="#e0f4ff"><circle cx="98" cy="194" r="4"/><circle cx="222" cy="262" r="3"/><circle cx="358" cy="212" r="3"/></g><text x="56.6" y="70" font-size="35.6" font-weight="bold" fill="#ffffff" font-family="Liberation Sans" textLength="381" lengthAdjust="spacingAndGlyphs" >The Internet's History</text><text x="93.4" y="109" font-size="19.2" font-weight="normal" fill="#ffffff" font-family="Liberation Sans" textLength="311.6" lengthAdjust="spacingAndGlyphs" >"The Ultimate Idea of Communication"</text></svg></div></div>
<div style="position:absolute;left:1257px;top:1518.3px;width:346px;height:52.5px;box-sizing:border-box;border:2px solid #141414;border-radius:27px"></div>
<div style="position:absolute;left:1620px;top:1518.3px;width:52.7px;height:52.7px;box-sizing:border-box;border:2px solid #141414;border-radius:50%"></div>
<svg style="position:absolute;left:1636px;top:1534.5px" width="22" height="21" viewBox="0 0 22 21"><path d="M3.6 1.2 H17.9 V19.2 L10.75 15.2 L3.6 19.2 Z" fill="none" stroke="#141414" stroke-width="2" stroke-linejoin="miter"/></svg>
<div style="position:absolute;left:1237.9px;top:1064.7px;width:104.9px;height:25.8px;border-radius:13px;background:rgba(0,0,0,0.72)"></div>
<div style="position:absolute;left:1745px;top:1035px;width:500px;height:557.5px;box-sizing:border-box;border:1.5px solid #e4e4e4;border-radius:6px;background:#fff;overflow:hidden"><div style="position:absolute;left:0;top:0;width:498px;height:331px;overflow:hidden;border-radius:5px 5px 0 0"><svg style="position:absolute;left:0;top:0" width="498" height="331" viewBox="0 0 498 331"><defs></defs><rect width="498" height="331" fill="#2b3553"/><ellipse cx="581.2" cy="179.6" rx="250.0" ry="144.0" transform="rotate(-10 581.2 179.6)" fill="none" stroke="#8fd0b3" stroke-width="1.15"/><ellipse cx="582.5" cy="181.8" rx="240.9" ry="142.5" transform="rotate(-10 582.5 181.8)" fill="none" stroke="#8fd0b3" stroke-width="1.15"/><ellipse cx="583.8" cy="184.0" rx="231.8" ry="141.1" transform="rotate(-10 583.8 184.0)" fill="none" stroke="#8fd0b3" stroke-width="1.15"/><ellipse cx="585.2" cy="186.2" rx="222.7" ry="139.6" transform="rotate(-10 585.2 186.2)" fill="none" stroke="#8fd0b3" stroke-width="1.15"/><ellipse cx="586.5" cy="188.4" rx="213.6" ry="138.2" transform="rotate(-10 586.5 188.4)" fill="none" stroke="#8fd0b3" stroke-width="1.15"/><ellipse cx="587.8" cy="190.7" rx="204.5" ry="136.7" transform="rotate(-10 587.8 190.7)" fill="none" stroke="#8fd0b3" stroke-width="1.15"/><ellipse cx="589.1" cy="192.9" rx="195.5" ry="135.3" transform="rotate(-10 589.1 192.9)" fill="none" stroke="#8fd0b3" stroke-width="1.15"/><ellipse cx="590.4" cy="195.1" rx="186.4" ry="133.8" transform="rotate(-10 590.4 195.1)" fill="none" stroke="#8fd0b3" stroke-width="1.15"/><ellipse cx="591.8" cy="197.3" rx="177.3" ry="132.4" transform="rotate(-10 591.8 197.3)" fill="none" stroke="#8fd0b3" stroke-width="1.15"/><ellipse cx="593.1" cy="199.5" rx="168.2" ry="130.9" transform="rotate(-10 593.1 199.5)" fill="none" stroke="#8fd0b3" stroke-width="1.15"/><ellipse cx="594.4" cy="201.7" rx="159.1" ry="129.5" transform="rotate(-10 594.4 201.7)" fill="none" stroke="#8fd0b3" stroke-width="1.15"/><ellipse cx="595.7" cy="204.0" rx="150.0" ry="128.0" transform="rotate(-10 595.7 204.0)" fill="none" stroke="#8fd0b3" stroke-width="1.15"/><ellipse cx="547.1" cy="179.9" rx="200.0" ry="85.0" transform="rotate(-23.0 547.1 179.9)" fill="none" stroke="#8fd0b3" stroke-width="1.15"/><ellipse cx="551.0" cy="178.8" rx="201.8" ry="81.8" transform="rotate(-22.727272727272727 551.0 178.8)" fill="none" stroke="#8fd0b3" stroke-width="1.15"/><ellipse cx="554.8" cy="177.7" rx="203.6" ry="78.6" transform="rotate(-22.454545454545453 554.8 177.7)" fill="none" stroke="#8fd0b3" stroke-width="1.15"/><ellipse cx="558.7" cy="176.6" rx="205.5" ry="75.5" transform="rotate(-22.181818181818183 558.7 176.6)" fill="none" stroke="#8fd0b3" stroke-width="1.15"/><ellipse cx="562.6" cy="175.6" rx="207.3" ry="72.3" transform="rotate(-21.90909090909091 562.6 175.6)" fill="none" stroke="#8fd0b3" stroke-width="1.15"/><ellipse cx="566.4" cy="174.5" rx="209.1" ry="69.1" transform="rotate(-21.636363636363637 566.4 174.5)" fill="none" stroke="#8fd0b3" stroke-width="1.15"/><ellipse cx="570.3" cy="173.5" rx="210.9" ry="65.9" transform="rotate(-21.363636363636363 570.3 173.5)" fill="none" stroke="#8fd0b3" stroke-width="1.15"/><ellipse cx="574.2" cy="172.5" rx="212.7" ry="62.7" transform="rotate(-21.09090909090909 574.2 172.5)" fill="none" stroke="#8fd0b3" stroke-width="1.15"/><ellipse cx="578.1" cy="171.6" rx="214.5" ry="59.5" transform="rotate(-20.81818181818182 578.1 171.6)" fill="none" stroke="#8fd0b3" stroke-width="1.15"/><ellipse cx="582.0" cy="170.6" rx="216.4" ry="56.4" transform="rotate(-20.545454545454547 582.0 170.6)" fill="none" stroke="#8fd0b3" stroke-width="1.15"/><ellipse cx="585.8" cy="169.7" rx="218.2" ry="53.2" transform="rotate(-20.272727272727273 585.8 169.7)" fill="none" stroke="#8fd0b3" stroke-width="1.15"/><ellipse cx="589.7" cy="168.8" rx="220.0" ry="50.0" transform="rotate(-20.0 589.7 168.8)" fill="none" stroke="#8fd0b3" stroke-width="1.15"/><line x1="233" y1="43" x2="302" y2="43" stroke="#8fd0b3" stroke-width="1"/><text x="463" y="46" font-size="8.5" font-weight="bold" fill="#e8e8e8" font-family="Liberation Sans" >JANUARY 2024</text><g stroke="#8fd0b3" stroke-width="2.2" stroke-linecap="round"><line x1="3" y1="46" x2="13" y2="46"/><line x1="3" y1="46" x2="10" y2="38"/><line x1="3" y1="46" x2="10" y2="54"/><line x1="3" y1="46" x2="3" y2="34"/><line x1="3" y1="46" x2="3" y2="58"/></g><text x="-2" y="140" font-size="42" font-weight="normal" fill="#ffffff" font-family="Liberation Sans" textLength="312" lengthAdjust="spacingAndGlyphs" >ANNUAL REPORT</text><text x="-4" y="187" font-size="42" font-weight="normal" fill="#ffffff" font-family="Liberation Sans" textLength="285" lengthAdjust="spacingAndGlyphs" >PRESENTATION</text><text x="-6" y="223" font-size="13" font-weight="normal" fill="#f0f0f0" font-family="Liberation Sans" textLength="146" lengthAdjust="spacingAndGlyphs" >Add a short description here</text><text x="-10" y="281" font-size="11" font-weight="bold" fill="#8fd0b3" font-family="Liberation Sans" textLength="69" lengthAdjust="spacingAndGlyphs" >PRESENTED TO</text><text x="-12" y="296" font-size="11" font-weight="normal" fill="#f0f0f0" font-family="Liberation Sans" textLength="74" lengthAdjust="spacingAndGlyphs" >Write name here</text><text x="118" y="281" font-size="11" font-weight="bold" fill="#8fd0b3" font-family="Liberation Sans" textLength="72.6" lengthAdjust="spacingAndGlyphs" >PRESENTED BY</text><text x="118" y="296" font-size="11" font-weight="normal" fill="#f0f0f0" font-family="Liberation Sans" textLength="76" lengthAdjust="spacingAndGlyphs" >Write name here</text><circle cx="255.5" cy="285" r="5.5" fill="#8fd0b3"/><text x="268.4" y="281" font-size="8.5" font-weight="normal" fill="#f0f0f0" font-family="Liberation Sans" textLength="46" lengthAdjust="spacingAndGlyphs" >Information</text><text x="268.4" y="291.5" font-size="8.5" font-weight="normal" fill="#f0f0f0" font-family="Liberation Sans" textLength="70" lengthAdjust="spacingAndGlyphs" >available in audio.</text></svg></div></div>
<div style="position:absolute;left:1787px;top:1518.3px;width:346px;height:52.5px;box-sizing:border-box;border:2px solid #141414;border-radius:27px"></div>
<div style="position:absolute;left:2150px;top:1518.3px;width:52.7px;height:52.7px;box-sizing:border-box;border:2px solid #141414;border-radius:50%"></div>
<svg style="position:absolute;left:2166px;top:1534.5px" width="22" height="21" viewBox="0 0 22 21"><path d="M3.6 1.2 H17.9 V19.2 L10.75 15.2 L3.6 19.2 Z" fill="none" stroke="#141414" stroke-width="2" stroke-linejoin="miter"/></svg>
<div style="position:absolute;left:1767.9px;top:1064.7px;width:104.9px;height:25.8px;border-radius:13px;background:rgba(0,0,0,0.72)"></div>
<div style="position:absolute;left:685px;top:1643px;width:500px;height:100px;box-sizing:border-box;border:1.5px solid #e4e4e4;border-radius:6px;background:#fff;overflow:hidden"><div style="position:absolute;left:0;top:0;width:498px;height:98px;overflow:hidden;border-radius:5px 5px 0 0"><svg style="position:absolute;left:0;top:0" width="498" height="331" viewBox="0 0 498 331"><defs></defs><rect width="498" height="331" fill="#1f2156"/><path d="M316 0 L498 0 L498 331 L346 331 Q340 120 316 0 Z" fill="#7a2a6a"/><path d="M318 0 Q338 40 348 100" stroke="#c23a78" stroke-width="1.6" fill="none"/><path d="M324 0 Q344 40 354 100" stroke="#c23a78" stroke-width="1.6" fill="none"/><path d="M330 0 Q350 40 360 100" stroke="#c23a78" stroke-width="1.6" fill="none"/><path d="M336 0 Q356 40 366 100" stroke="#c23a78" stroke-width="1.6" fill="none"/><path d="M342 0 Q362 40 372 100" stroke="#c23a78" stroke-width="1.6" fill="none"/><path d="M348 0 Q368 40 378 100" stroke="#c23a78" stroke-width="1.6" fill="none"/><path d="M354 0 Q374 40 384 100" stroke="#c23a78" stroke-width="1.6" fill="none"/><path d="M360 0 Q380 40 390 100" stroke="#c23a78" stroke-width="1.6" fill="none"/><path d="M366 0 Q386 40 396 100" stroke="#c23a78" stroke-width="1.6" fill="none"/><path d="M372 0 Q392 40 402 100" stroke="#c23a78" stroke-width="1.6" fill="none"/><path d="M378 0 Q398 40 408 100" stroke="#c23a78" stroke-width="1.6" fill="none"/><path d="M384 0 Q404 40 414 100" stroke="#c23a78" stroke-width="1.6" fill="none"/><path d="M390 0 Q410 40 420 100" stroke="#c23a78" stroke-width="1.6" fill="none"/><path d="M396 0 Q416 40 426 100" stroke="#c23a78" stroke-width="1.6" fill="none"/><path d="M402 0 Q422 40 432 100" stroke="#c23a78" stroke-width="1.6" fill="none"/><path d="M408 0 Q428 40 438 100" stroke="#c23a78" stroke-width="1.6" fill="none"/><path d="M414 0 Q434 40 444 100" stroke="#c23a78" stroke-width="1.6" fill="none"/><path d="M420 0 Q440 40 450 100" stroke="#c23a78" stroke-width="1.6" fill="none"/><path d="M426 0 Q446 40 456 100" stroke="#c23a78" stroke-width="1.6" fill="none"/><path d="M432 0 Q452 40 462 100" stroke="#c23a78" stroke-width="1.6" fill="none"/><path d="M438 0 Q458 40 468 100" stroke="#c23a78" stroke-width="1.6" fill="none"/><path d="M444 0 Q464 40 474 100" stroke="#c23a78" stroke-width="1.6" fill="none"/><path d="M450 0 Q470 40 480 100" stroke="#c23a78" stroke-width="1.6" fill="none"/><path d="M456 0 Q476 40 486 100" stroke="#c23a78" stroke-width="1.6" fill="none"/><path d="M462 0 Q482 40 492 100" stroke="#c23a78" stroke-width="1.6" fill="none"/><path d="M468 0 Q488 40 498 100" stroke="#c23a78" stroke-width="1.6" fill="none"/><path d="M474 0 Q494 40 504 100" stroke="#c23a78" stroke-width="1.6" fill="none"/><path d="M480 0 Q500 40 510 100" stroke="#c23a78" stroke-width="1.6" fill="none"/><path d="M486 0 Q506 40 516 100" stroke="#c23a78" stroke-width="1.6" fill="none"/><path d="M492 0 Q512 40 522 100" stroke="#c23a78" stroke-width="1.6" fill="none"/><path d="M13 37 L5 43 L13 49 M18 37 L10 43 L18 49" stroke="#fff" stroke-width="2.4" fill="none"/></svg></div></div>
<div style="position:absolute;left:707.9px;top:1674.1px;width:104.9px;height:25.8px;border-radius:13px;background:rgba(0,0,0,0.72)"></div>
<div style="position:absolute;left:1215px;top:1643px;width:500px;height:100px;box-sizing:border-box;border:1.5px solid #e4e4e4;border-radius:6px;background:#fff;overflow:hidden"><div style="position:absolute;left:0;top:0;width:498px;height:98px;overflow:hidden;border-radius:5px 5px 0 0"><svg style="position:absolute;left:0;top:0" width="498" height="331" viewBox="0 0 498 331"><defs><pattern id="u7" width="28" height="90" patternUnits="userSpaceOnUse"><rect width="28" height="90" fill="#e9e0d9"/><path d="M4 0 L4 30 Q4 44 14 44 Q24 44 24 30 L24 0" stroke="#ddcfc2" stroke-width="7" fill="none"/><path d="M-10 90 L-10 62 Q-10 48 0 48 Q10 48 10 62 L10 90" stroke="#ddcfc2" stroke-width="7" fill="none"/><path d="M18 90 L18 62 Q18 48 28 48 Q38 48 38 62 L38 90" stroke="#ddcfc2" stroke-width="7" fill="none"/></pattern></defs><rect width="498" height="331" fill="url(#u7)"/><polygon points="409,0 498,0 498,48 467,41" fill="#5c5c5c"/><polygon points="0,52 18,45 40,47 62,64 0,64" fill="#a5a5a5"/></svg></div></div>
<div style="position:absolute;left:1237.9px;top:1674.1px;width:104.9px;height:25.8px;border-radius:13px;background:rgba(0,0,0,0.72)"></div>
<div style="position:absolute;left:1745px;top:1643px;width:500px;height:100px;box-sizing:border-box;border:1.5px solid #e4e4e4;border-radius:6px;background:#fff;overflow:hidden"><div style="position:absolute;left:0;top:0;width:498px;height:98px;overflow:hidden;border-radius:5px 5px 0 0"><svg style="position:absolute;left:0;top:0" width="498" height="331" viewBox="0 0 498 331"><defs></defs><rect width="498" height="331" fill="#f4f7fb"/><path d="M20 0 Q30 30 10 64" stroke="#e6e8ec" stroke-width="3" fill="none"/><line x1="9" y1="26" x2="4" y2="38" stroke="#f0b24a" stroke-width="4.5" stroke-linecap="round"/><text x="20" y="36" font-size="11" font-weight="bold" fill="#1c6a7a" font-family="Liberation Sans" textLength="60" lengthAdjust="spacingAndGlyphs" >Wanderlust</text><text x="370.7" y="33.2" font-size="8" font-weight="normal" fill="#666" font-family="Liberation Sans" textLength="22.7" lengthAdjust="spacingAndGlyphs" >Home</text><text x="408" y="33.2" font-size="8" font-weight="normal" fill="#666" font-family="Liberation Sans" textLength="22" lengthAdjust="spacingAndGlyphs" >About</text><rect x="442" y="18.5" width="80" height="20.7" rx="10.3" fill="none" stroke="#f0b24a" stroke-width="1.3"/><text x="455.6" y="33.2" font-size="8" font-weight="normal" fill="#666" font-family="Liberation Sans" textLength="40.4" lengthAdjust="spacingAndGlyphs" >Contact Us</text></svg></div></div>
<div style="position:absolute;left:1767.9px;top:1674.1px;width:104.9px;height:25.8px;border-radius:13px;background:rgba(0,0,0,0.72)"></div>
<div id="t_logo" class="t" style="left:229.5px;top:65.9px;font-size:40.90px;line-height:40.90px;font-weight:400;color:#1f1f1f;letter-spacing:0.324px;-webkit-text-stroke:0.9px #1f1f1f;">Slideshop</div>
<div id="t_company" class="t" style="left:516.4px;top:72.1px;font-size:24.30px;line-height:24.30px;font-weight:400;color:#1a1a1a;letter-spacing:0.417px;">Company</div>
<div id="t_pricing" class="t" style="left:710.7px;top:72.1px;font-size:24.30px;line-height:24.30px;font-weight:400;color:#1a1a1a;letter-spacing:0.053px;">Pricing</div>
<div id="t_login" class="t" style="left:1980.0px;top:72.3px;font-size:24.80px;line-height:24.80px;font-weight:400;color:#1a1a1a;letter-spacing:-0.593px;">Log in</div>
<div id="t_signup" class="t" style="left:2130.0px;top:72.3px;font-size:24.80px;line-height:24.80px;font-weight:400;color:#1a1a1a;letter-spacing:-0.518px;">Sign up</div>
<div id="t_tab_all" class="t" style="left:196.5px;top:213.2px;font-size:21.40px;line-height:21.40px;font-weight:400;color:#ffffff;letter-spacing:-0.641px;-webkit-text-stroke:0.35px #ffffff;">All</div>
<div id="t_tab_sales" class="t" style="left:288.0px;top:213.2px;font-size:21.40px;line-height:21.40px;font-weight:400;color:#ffffff;letter-spacing:-0.979px;-webkit-text-stroke:0.35px #ffffff;">Sales</div>
<div id="t_tab_dv" class="t" style="left:406.5px;top:213.2px;font-size:21.40px;line-height:21.40px;font-weight:400;color:#1f1f1f;letter-spacing:0.309px;-webkit-text-stroke:0.35px #1f1f1f;">Data Visualization</div>
<div id="t_tab_prop" class="t" style="left:646.8px;top:213.2px;font-size:21.40px;line-height:21.40px;font-weight:400;color:#ffffff;letter-spacing:-0.177px;-webkit-text-stroke:0.35px #ffffff;">Proposal</div>
<div id="t_tab_port" class="t" style="left:798.6px;top:213.2px;font-size:21.40px;line-height:21.40px;font-weight:400;color:#ffffff;letter-spacing:0.114px;-webkit-text-stroke:0.35px #ffffff;">Portfolio</div>
<div id="t_tab_ipd" class="t" style="left:946.5px;top:213.2px;font-size:21.40px;line-height:21.40px;font-weight:400;color:#ffffff;letter-spacing:0.063px;-webkit-text-stroke:0.35px #ffffff;">Investor Pitch Deck</div>
<div id="t_tab_fs" class="t" style="left:1200.0px;top:213.2px;font-size:21.40px;line-height:21.40px;font-weight:400;color:#ffffff;letter-spacing:0.118px;-webkit-text-stroke:0.35px #ffffff;">Financial Statements</div>
<div id="t_tab_kpi" class="t" style="left:1470.0px;top:213.2px;font-size:21.40px;line-height:21.40px;font-weight:400;color:#ffffff;letter-spacing:-0.259px;-webkit-text-stroke:0.35px #ffffff;">KPI Visualization</div>
<div id="t_tab_ana" class="t" style="left:1694.4px;top:213.2px;font-size:21.40px;line-height:21.40px;font-weight:400;color:#ffffff;letter-spacing:-0.208px;-webkit-text-stroke:0.35px #ffffff;">Analysis</div>
<div id="t_tab_po" class="t" style="left:1840.5px;top:213.2px;font-size:21.40px;line-height:21.40px;font-weight:400;color:#ffffff;letter-spacing:0.102px;-webkit-text-stroke:0.35px #ffffff;">Project Overview</div>
<div id="t_tab_bp" class="t" style="left:2072.4px;top:213.2px;font-size:21.40px;line-height:21.40px;font-weight:400;color:#ffffff;letter-spacing:-0.439px;-webkit-text-stroke:0.35px #ffffff;">Business Plan</div>
<div id="t_hide" class="t" style="left:202.3px;top:320.4px;font-size:26.70px;line-height:26.70px;font-weight:700;color:#1f1f1f;letter-spacing:0.087px;">Hide Filters</div>
<div id="t_sh1" class="t" style="left:401.6px;top:321.4px;font-size:25.80px;line-height:25.80px;font-weight:400;color:#1f1f1f;letter-spacing:-1.295px;">Showing</div>
<div id="t_sh2" class="t" style="left:499.0px;top:321.4px;font-size:25.80px;line-height:25.80px;font-weight:400;color:#1f1f1f;letter-spacing:0.000px;transform:scaleX(0.782);transform-origin:0 0;-webkit-text-stroke:0.7px #1f1f1f;">1,291</div>
<div id="t_sh3" class="t" style="left:558.8px;top:321.4px;font-size:25.80px;line-height:25.80px;font-weight:400;color:#1f1f1f;letter-spacing:-0.349px;">out of</div>
<div id="t_sh4" class="t" style="left:629.8px;top:321.4px;font-size:25.80px;line-height:25.80px;font-weight:400;color:#1f1f1f;letter-spacing:0.000px;transform:scaleX(0.945);transform-origin:0 0;-webkit-text-stroke:0.7px #1f1f1f;">30,223</div>
<div id="t_sh5" class="t" style="left:713.6px;top:321.4px;font-size:25.80px;line-height:25.80px;font-weight:400;color:#1f1f1f;letter-spacing:-0.480px;">templates</div>
<div id="t_sort" class="t" style="left:1984.7px;top:322.7px;font-size:23.80px;line-height:23.80px;font-weight:400;color:#1a1a1a;letter-spacing:0.367px;">Sort by: Editor’s Pick</div>
<div id="t_industry" class="t" style="left:149.9px;top:420.8px;font-size:25.00px;line-height:25.00px;font-weight:400;color:#1a1a1a;letter-spacing:0.309px;">Industry</div>
<div id="t_ind0" class="t" style="left:201.5px;top:498.7px;font-size:20.60px;line-height:20.60px;font-weight:400;color:#1a1a1a;letter-spacing:0.314px;">Education (323)</div>
<div id="t_ind1" class="t" style="left:201.5px;top:550.4px;font-size:20.60px;line-height:20.60px;font-weight:400;color:#1a1a1a;letter-spacing:0.284px;">Marketing (643)</div>
<div id="t_ind2" class="t" style="left:201.5px;top:602.1px;font-size:20.60px;line-height:20.60px;font-weight:400;color:#1a1a1a;letter-spacing:-0.149px;">IT &amp; Software (122)</div>
<div id="t_ind3" class="t" style="left:201.5px;top:653.8px;font-size:20.60px;line-height:20.60px;font-weight:400;color:#1a1a1a;letter-spacing:0.033px;">Banking &amp; Finance (532)</div>
<div id="t_ind4" class="t" style="left:201.5px;top:705.5px;font-size:20.60px;line-height:20.60px;font-weight:400;color:#1a1a1a;letter-spacing:0.065px;">Health Care &amp; Pharma (326)</div>
<div id="t_ind5" class="t" style="left:201.5px;top:757.2px;font-size:20.60px;line-height:20.60px;font-weight:400;color:#1a1a1a;letter-spacing:0.218px;">Insurance (333)</div>
<div id="t_ind6" class="t" style="left:201.5px;top:808.9px;font-size:20.60px;line-height:20.60px;font-weight:400;color:#1a1a1a;letter-spacing:0.383px;">Manufacturing (546)</div>
<div id="t_ind7" class="t" style="left:201.5px;top:860.6px;font-size:20.60px;line-height:20.60px;font-weight:400;color:#1a1a1a;letter-spacing:0.439px;">E-commerce (673)</div>
<div id="t_ind8" class="t" style="left:201.5px;top:912.3px;font-size:20.60px;line-height:20.60px;font-weight:400;color:#1a1a1a;letter-spacing:-0.297px;">Energy (201)</div>
<div id="t_ind9" class="t" style="left:201.5px;top:964.0px;font-size:20.60px;line-height:20.60px;font-weight:400;color:#1a1a1a;letter-spacing:0.455px;">Hospitality &amp; Tourism (54)</div>
<div id="t_ind10" class="t" style="left:201.5px;top:1015.7px;font-size:20.60px;line-height:20.60px;font-weight:400;color:#1a1a1a;letter-spacing:0.418px;">Transportation (33)</div>
<div id="t_ind11" class="t" style="left:201.5px;top:1067.4px;font-size:20.60px;line-height:20.60px;font-weight:400;color:#1a1a1a;letter-spacing:0.310px;">Logistics (35)</div>
<div id="t_ind12" class="t" style="left:201.5px;top:1119.1px;font-size:20.60px;line-height:20.60px;font-weight:400;color:#1a1a1a;letter-spacing:0.479px;">Entertainment (54)</div>
<div id="t_ind13" class="t" style="left:201.5px;top:1170.8px;font-size:20.60px;line-height:20.60px;font-weight:400;color:#1a1a1a;letter-spacing:-0.174px;">Real Estate (43)</div>
<div id="t_ind14" class="t" style="left:201.5px;top:1222.5px;font-size:20.60px;line-height:20.60px;font-weight:400;color:#1a1a1a;letter-spacing:0.564px;">Construction (654)</div>
<div id="t_ind15" class="t" style="left:201.5px;top:1274.2px;font-size:20.60px;line-height:20.60px;font-weight:400;color:#1a1a1a;letter-spacing:0.114px;">Farming (542)</div>
<div id="t_ind16" class="t" style="left:201.5px;top:1325.9px;font-size:20.60px;line-height:20.60px;font-weight:400;color:#1a1a1a;letter-spacing:-0.146px;">Automotive (116)</div>
<div id="t_ind17" class="t" style="left:201.5px;top:1377.6px;font-size:20.60px;line-height:20.60px;font-weight:400;color:#1a1a1a;letter-spacing:0.221px;">Events &amp; Promotion (25)</div>
<div id="t_components" class="t" style="left:150.0px;top:1454.0px;font-size:24.00px;line-height:24.00px;font-weight:400;color:#1a1a1a;letter-spacing:0.836px;">Components</div>
<div id="t_chip0" class="t" style="left:181.3px;top:1545.3px;font-size:17.50px;line-height:17.50px;font-weight:400;color:#333333;letter-spacing:-0.425px;">SWOT Analysis (312)</div>
<div id="t_chip1" class="t" style="left:383.5px;top:1545.3px;font-size:17.50px;line-height:17.50px;font-weight:400;color:#333333;letter-spacing:0.058px;">Gantt Chart (312)</div>
<div id="t_chip2" class="t" style="left:181.3px;top:1615.1px;font-size:17.50px;line-height:17.50px;font-weight:400;color:#333333;letter-spacing:-0.061px;">Bar/Column Chart (312)</div>
<div id="t_chip3" class="t" style="left:408.5px;top:1615.1px;font-size:17.50px;line-height:17.50px;font-weight:400;color:#333333;letter-spacing:-0.227px;">Pie Chart (312)</div>
<div id="t_chip4" class="t" style="left:181.5px;top:1685.4px;font-size:17.50px;line-height:17.50px;font-weight:400;color:#333333;letter-spacing:-0.200px;">Mindmap (312)</div>
<div id="t_badge0" class="t" style="left:725.0px;top:459.4px;font-size:18.40px;line-height:18.40px;font-weight:400;color:#ffffff;letter-spacing:-0.274px;">24 slides</div>
<div id="t_title0" class="t" style="left:727.4px;top:785.7px;font-size:31.90px;line-height:31.90px;font-weight:700;color:#1f1f1f;letter-spacing:-0.816px;">Slide Title</div>
<div id="t_l1_0" class="t" style="left:727.4px;top:830.0px;font-size:24.60px;line-height:24.60px;font-weight:400;color:#6b6b6b;letter-spacing:-0.060px;">Lorem ipsum dolor sit amet</div>
<div id="t_l2_0" class="t" style="left:727.4px;top:857.4px;font-size:24.60px;line-height:24.60px;font-weight:400;color:#6b6b6b;letter-spacing:-0.254px;">consectetur. Euismod netus id diam...</div>
<div id="t_vt0" class="t" style="left:827.5px;top:925.9px;font-size:20.90px;line-height:20.90px;font-weight:700;color:#1a1a1a;letter-spacing:0.158px;">View Template</div>
<div id="t_badge1" class="t" style="left:1255.0px;top:459.4px;font-size:18.40px;line-height:18.40px;font-weight:400;color:#ffffff;letter-spacing:-0.274px;">24 slides</div>
<div id="t_title1" class="t" style="left:1257.4px;top:785.7px;font-size:31.90px;line-height:31.90px;font-weight:700;color:#1f1f1f;letter-spacing:-0.816px;">Slide Title</div>
<div id="t_l1_1" class="t" style="left:1257.4px;top:830.0px;font-size:24.60px;line-height:24.60px;font-weight:400;color:#6b6b6b;letter-spacing:-0.060px;">Lorem ipsum dolor sit amet</div>
<div id="t_l2_1" class="t" style="left:1257.4px;top:857.4px;font-size:24.60px;line-height:24.60px;font-weight:400;color:#6b6b6b;letter-spacing:-0.254px;">consectetur. Euismod netus id diam...</div>
<div id="t_vt1" class="t" style="left:1357.5px;top:925.9px;font-size:20.90px;line-height:20.90px;font-weight:700;color:#1a1a1a;letter-spacing:0.158px;">View Template</div>
<div id="t_badge2" class="t" style="left:1785.0px;top:459.4px;font-size:18.40px;line-height:18.40px;font-weight:400;color:#ffffff;letter-spacing:-0.274px;">24 slides</div>
<div id="t_title2" class="t" style="left:1787.4px;top:785.7px;font-size:31.90px;line-height:31.90px;font-weight:700;color:#1f1f1f;letter-spacing:-0.816px;">Slide Title</div>
<div id="t_l1_2" class="t" style="left:1787.4px;top:830.0px;font-size:24.60px;line-height:24.60px;font-weight:400;color:#6b6b6b;letter-spacing:-0.060px;">Lorem ipsum dolor sit amet</div>
<div id="t_l2_2" class="t" style="left:1787.4px;top:857.4px;font-size:24.60px;line-height:24.60px;font-weight:400;color:#6b6b6b;letter-spacing:-0.254px;">consectetur. Euismod netus id diam...</div>
<div id="t_vt2" class="t" style="left:1887.5px;top:925.9px;font-size:20.90px;line-height:20.90px;font-weight:700;color:#1a1a1a;letter-spacing:0.158px;">View Template</div>
<div id="t_badge3" class="t" style="left:725.0px;top:1068.4px;font-size:18.40px;line-height:18.40px;font-weight:400;color:#ffffff;letter-spacing:-0.274px;">24 slides</div>
<div id="t_title3" class="t" style="left:727.4px;top:1394.7px;font-size:31.90px;line-height:31.90px;font-weight:700;color:#1f1f1f;letter-spacing:-0.816px;">Slide Title</div>
<div id="t_l1_3" class="t" style="left:727.4px;top:1439.0px;font-size:24.60px;line-height:24.60px;font-weight:400;color:#6b6b6b;letter-spacing:-0.060px;">Lorem ipsum dolor sit amet</div>
<div id="t_l2_3" class="t" style="left:727.4px;top:1466.4px;font-size:24.60px;line-height:24.60px;font-weight:400;color:#6b6b6b;letter-spacing:-0.254px;">consectetur. Euismod netus id diam...</div>
<div id="t_vt3" class="t" style="left:827.5px;top:1534.9px;font-size:20.90px;line-height:20.90px;font-weight:700;color:#1a1a1a;letter-spacing:0.158px;">View Template</div>
<div id="t_badge4" class="t" style="left:1255.0px;top:1068.4px;font-size:18.40px;line-height:18.40px;font-weight:400;color:#ffffff;letter-spacing:-0.274px;">24 slides</div>
<div id="t_title4" class="t" style="left:1257.4px;top:1394.7px;font-size:31.90px;line-height:31.90px;font-weight:700;color:#1f1f1f;letter-spacing:-0.816px;">Slide Title</div>
<div id="t_l1_4" class="t" style="left:1257.4px;top:1439.0px;font-size:24.60px;line-height:24.60px;font-weight:400;color:#6b6b6b;letter-spacing:-0.060px;">Lorem ipsum dolor sit amet</div>
<div id="t_l2_4" class="t" style="left:1257.4px;top:1466.4px;font-size:24.60px;line-height:24.60px;font-weight:400;color:#6b6b6b;letter-spacing:-0.254px;">consectetur. Euismod netus id diam...</div>
<div id="t_vt4" class="t" style="left:1357.5px;top:1534.9px;font-size:20.90px;line-height:20.90px;font-weight:700;color:#1a1a1a;letter-spacing:0.158px;">View Template</div>
<div id="t_badge5" class="t" style="left:1785.0px;top:1068.4px;font-size:18.40px;line-height:18.40px;font-weight:400;color:#ffffff;letter-spacing:-0.274px;">24 slides</div>
<div id="t_title5" class="t" style="left:1787.4px;top:1394.7px;font-size:31.90px;line-height:31.90px;font-weight:700;color:#1f1f1f;letter-spacing:-0.816px;">Slide Title</div>
<div id="t_l1_5" class="t" style="left:1787.4px;top:1439.0px;font-size:24.60px;line-height:24.60px;font-weight:400;color:#6b6b6b;letter-spacing:-0.060px;">Lorem ipsum dolor sit amet</div>
<div id="t_l2_5" class="t" style="left:1787.4px;top:1466.4px;font-size:24.60px;line-height:24.60px;font-weight:400;color:#6b6b6b;letter-spacing:-0.254px;">consectetur. Euismod netus id diam...</div>
<div id="t_vt5" class="t" style="left:1887.5px;top:1534.9px;font-size:20.90px;line-height:20.90px;font-weight:700;color:#1a1a1a;letter-spacing:0.158px;">View Template</div>
<div id="t_badge6" class="t" style="left:725.0px;top:1677.8px;font-size:18.40px;line-height:18.40px;font-weight:400;color:#ffffff;letter-spacing:-0.274px;">24 slides</div>
<div id="t_badge7" class="t" style="left:1255.0px;top:1677.8px;font-size:18.40px;line-height:18.40px;font-weight:400;color:#ffffff;letter-spacing:-0.274px;">24 slides</div>
<div id="t_badge8" class="t" style="left:1785.0px;top:1677.8px;font-size:18.40px;line-height:18.40px;font-weight:400;color:#ffffff;letter-spacing:-0.274px;">24 slides</div>
</body></html>
